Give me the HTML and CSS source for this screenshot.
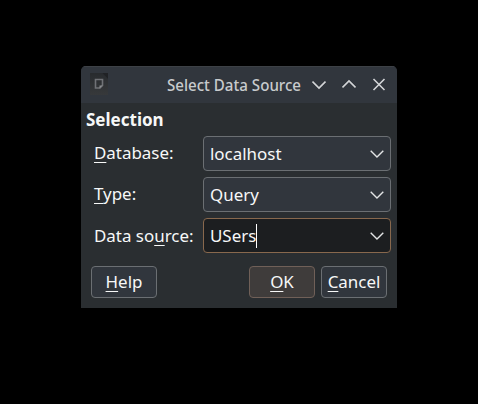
FILE: index.html
```html
<!DOCTYPE html>
<html lang="en">
<head>
<meta charset="utf-8">
<title>Select Data Source</title>
<link rel="stylesheet" href="styles.css">
</head>
<body>
<main class="dialog">
  <header class="titlebar">
    <svg class="app-icon" width="18" height="22" viewBox="0 0 18 22">
      <defs><linearGradient id="page" x1="0" y1="0" x2="0" y2="1"><stop offset="0" stop-color="#282b2e"/><stop offset="1" stop-color="#37393b"/></linearGradient></defs>
      <path d="M0 0H12L18 6V22H0Z" fill="url(#page)"/>
      <path d="M12 0H18V6Z" fill="#202225"/>
      <path d="M5.5 6.5H12.5V12.5L10 15H5.5Z" fill="none" stroke="#707276" stroke-width="1.6"/>
      <path d="M9.5 15.5V12.5H12.5Z" fill="#8b8d90"/>
    </svg>
    <h1 class="title">Select Data Source</h1>
    <div class="window-controls">
      <svg width="14" height="14" viewBox="0 0 14 14"><path d="M0.5 3.5L7 10L13.5 3.5"/></svg>
      <svg width="14" height="14" viewBox="0 0 14 14"><path d="M0.5 9.5L7 3L13.5 9.5"/></svg>
      <svg width="14" height="14" viewBox="0 0 14 14"><path d="M1.5 1L12.5 12M12.5 1L1.5 12"/></svg>
    </div>
  </header>
  <section class="content">
    <h2 class="heading">Selection</h2>
    <div class="form">
      <span class="label"><u>D</u>atabase:</span>
      <div class="field"><span>localhost</span><svg class="arrow" width="14" height="8" viewBox="0 0 14 8"><path d="M0.7 0.8L7 7L13.3 0.8"/></svg></div>
      <span class="label"><u>T</u>ype:</span>
      <div class="field"><span>Query</span><svg class="arrow" width="14" height="8" viewBox="0 0 14 8"><path d="M0.7 0.8L7 7L13.3 0.8"/></svg></div>
      <span class="label source-label">Data so<u>u</u>rce:</span>
      <div class="field focused"><span class="editing">USers</span><svg class="arrow" width="14" height="8" viewBox="0 0 14 8"><path d="M0.7 0.8L7 7L13.3 0.8"/></svg></div>
    </div>
    <footer class="actions">
      <button class="button help"><u>H</u>elp</button>
      <button class="button primary"><u>O</u>K</button>
      <button class="button"><u>C</u>ancel</button>
    </footer>
  </section>
</main>
</body>
</html>
```
FILE: styles.css
```css
* { box-sizing: border-box; }
body {
  margin: 0;
  height: 404px;
  padding: 66px 81px;
  background: #000;
  color: #f7f8f8;
  font: 16.93px/24px "Noto Sans", sans-serif;
  overflow: hidden;
}
.dialog {
  width: 316px;
  height: 242px;
  background: #2a2e31;
  border-radius: 5px 5px 0 0;
  overflow: hidden;
}
.titlebar {
  display: flex;
  align-items: center;
  height: 37px;
  padding: 0 11px 0 9px;
  background: #31363d;
  border-top: 1px solid #3d4146;
}
.app-icon { display: block; flex: none; margin-top: -2px; }
.title {
  width: 134px;
  margin: 0 11px 0 59px;
  color: #c8cbcd;
  font-size: 16.5px;
  font-weight: 500;
  white-space: nowrap;
  transform: scaleX(0.915);
  transform-origin: left;
}
.window-controls { display: flex; gap: 16px; }
.window-controls svg { fill: none; stroke: #d3d5d7; stroke-width: 1.6; }
.content { padding: 5px 6px 0 5px; }
.heading { margin: 0; font-size: 17px; line-height: 24px; font-weight: 700; }
.form {
  display: grid;
  grid-template-columns: 109px 187.5px;
  row-gap: 6px;
  margin: 4px 0 0 8px;
  align-items: center;
}
.label { padding-bottom: 2px; }
.source-label { padding-bottom: 0; }
u { text-decoration-thickness: 1px; text-underline-offset: 3px; text-decoration-skip-ink: none; }
.field {
  display: flex;
  align-items: center;
  justify-content: space-between;
  height: 35px;
  padding: 0 6px;
  background: #31363d;
  border: 1px solid #6b6f73;
  border-radius: 4px;
}
.focused { background: #1c1e20; border-color: #88684d; }
.editing { border-right: 1px solid #fff; }
.arrow { fill: none; stroke: #e2e4e5; stroke-width: 1.4; }
.actions { display: flex; gap: 6px; margin: 13px 4px 0 5px; }
.button {
  width: 66px;
  height: 32px;
  padding: 0;
  color: inherit;
  font: inherit;
  background: #31363d;
  border: 1px solid #6b6f73;
  border-radius: 4px;
}
.help { margin-right: auto; }
.primary { background: #3f3c3b; border-color: #706058; }
```
